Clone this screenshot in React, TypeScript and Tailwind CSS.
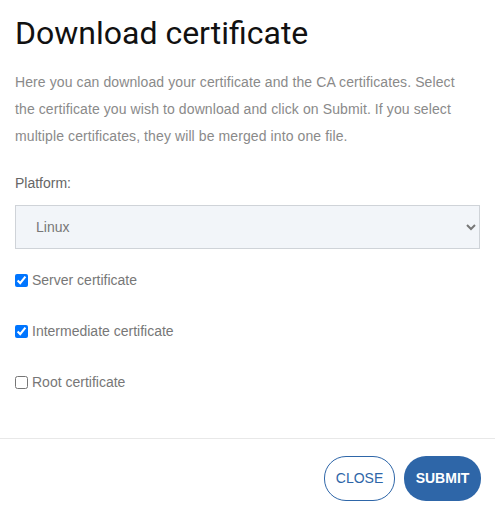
import { useState } from 'react';

const App = () => {
  const [platform, setPlatform] = useState('linux');
  const [checks, setChecks] = useState({ server: true, intermediate: true, root: false });

  const items = [
    { key: 'server' as const, label: 'Server certificate' },
    { key: 'intermediate' as const, label: 'Intermediate certificate' },
    { key: 'root' as const, label: 'Root certificate' },
  ];

  return (
    <div className="w-[495px] h-[518px] bg-white font-['Liberation_Sans',sans-serif] flex flex-col">
      <div className="px-[15px] pt-[13px]">
        {/* Title */}
        <h1 className="font-['Roboto',sans-serif] font-normal text-[32px] leading-[40px] text-[#111]">Download certificate</h1>

        {/* Intro */}
        <p className="mt-[16px] max-w-[458px] text-[14px] leading-[27px] tracking-[0.1px] text-[#8a8a8a]">
          Here you can download your certificate and the CA certificates. Select the certificate you wish to download and click on Submit. If you select multiple certificates, they will be merged into one file.
        </p>

        {/* Platform */}
        <label className="block mt-[23px] text-[14px] leading-[20px] text-[#666]">Platform:</label>
        <select
          value={platform}
          onChange={(e) => setPlatform(e.target.value)}
          className="mt-[12px] w-full h-[44px] pl-[16px] pr-[10px] bg-[#f2f5f9] border border-[#cfd3d8] text-[14px] text-[#777] outline-none"
        >
          <option value="linux">Linux</option>
          <option value="windows">Windows</option>
          <option value="mac">macOS</option>
        </select>

        {/* Certificates */}
        <div className="mt-[21px] flex flex-col gap-[31px]">
          {items.map((item) => (
            <label key={item.key} className="flex items-center gap-[4px] h-[20px] text-[14px] text-[#777]">
              <input
                type="checkbox"
                checked={checks[item.key]}
                onChange={(e) => setChecks({ ...checks, [item.key]: e.target.checked })}
                className="m-0 w-[13px] h-[13px]"
              />
              <span>{item.label}</span>
            </label>
          ))}
        </div>
      </div>

      {/* Footer */}
      <div className="mt-auto mb-[17px] border-t border-[#e8e8e8] pt-[17px] pr-[14px] flex justify-end gap-[9px]">
        <button className="h-[45px] w-[71px] rounded-[22px] border border-[#2e66a8] text-[#2e66a8] text-[14px] bg-white">
          CLOSE
        </button>
        <button className="h-[45px] w-[77px] rounded-[22px] bg-[#2e66a8] text-white text-[14px] font-bold">
          SUBMIT
        </button>
      </div>
    </div>
  );
};

export default App;
